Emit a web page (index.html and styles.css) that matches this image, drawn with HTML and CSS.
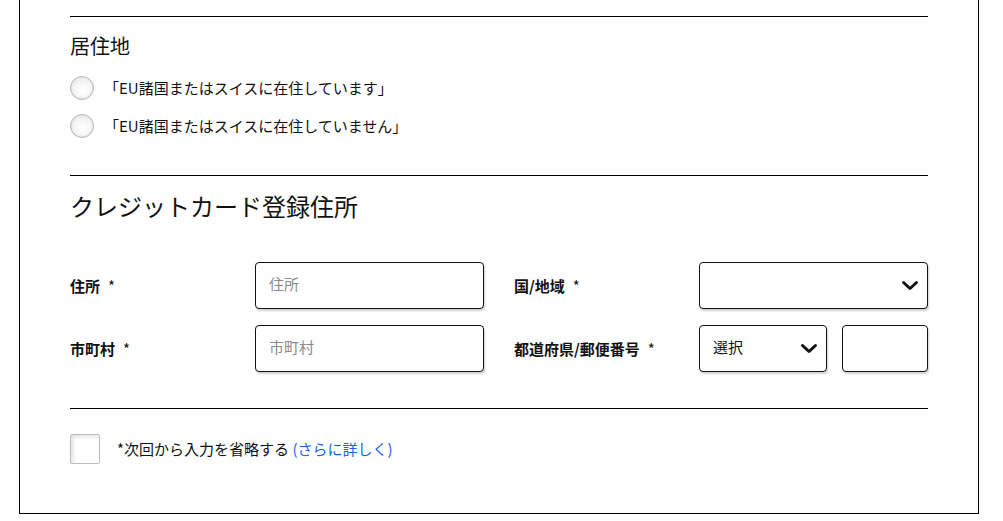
FILE: index.html
```html
<!DOCTYPE html>
<html lang="ja">
<head>
<meta charset="utf-8">
<link rel="stylesheet" href="styles.css">
</head>
<body>
<div class="panel">
  <hr class="rule rule-top">
  <section class="residence">
    <h2 class="h-small">居住地</h2>
    <label class="radio-row"><span class="radio"></span><span>「EU諸国またはスイスに在住しています」</span></label>
    <label class="radio-row"><span class="radio"></span><span>「EU諸国またはスイスに在住していません」</span></label>
  </section>
  <hr class="rule rule-mid">
  <section class="address">
    <h2 class="h-large">クレジットカード登録住所</h2>
    <div class="grid">
      <div class="lbl">住所<span class="req">*</span></div>
      <div class="field"><span class="ph">住所</span></div>
      <div class="sp"></div>
      <div class="lbl">国/地域<span class="req">*</span></div>
      <div class="field select">
        <span></span>
        <svg class="chev" width="18" height="11" viewBox="0 0 18 11"><path d="M2.5 2.5 L9 8.5 L15.5 2.5" fill="none" stroke="#111" stroke-width="3" stroke-linecap="round" stroke-linejoin="round"/></svg>
      </div>
      <div class="lbl">市町村<span class="req">*</span></div>
      <div class="field"><span class="ph">市町村</span></div>
      <div class="sp"></div>
      <div class="lbl">都道府県/郵便番号<span class="req">*</span></div>
      <div class="pair">
        <div class="field select">
          <span class="val">選択</span>
          <svg class="chev" width="18" height="11" viewBox="0 0 18 11"><path d="M2.5 2.5 L9 8.5 L15.5 2.5" fill="none" stroke="#111" stroke-width="3" stroke-linecap="round" stroke-linejoin="round"/></svg>
        </div>
        <div class="field"></div>
      </div>
    </div>
  </section>
  <hr class="rule rule-bot">
  <div class="remember">
    <span class="check"></span>
    <span class="remember-text">*次回から入力を省略する <a class="more" href="#">(さらに詳しく)</a></span>
  </div>
</div>
</body>
</html>
```

FILE: styles.css
```css
html, body {
  margin: 0;
  padding: 0;
  background: #fff;
}
body {
  font-family: "Noto Sans CJK JP", "Noto Sans", sans-serif;
  color: #111;
}
.panel {
  box-sizing: border-box;
  width: 960px;
  height: 514px;
  margin-left: 19px;
  border: 1px solid #000;
  border-top: 0;
  padding: 16px 50px 0 50px;
}
.rule {
  border: 0;
  height: 1px;
  background: #000;
  margin: 0;
}
.h-small {
  font-size: 20px;
  font-weight: 400;
  line-height: 30px;
  margin: 14px 0 0 0;
}
.residence {
  padding-bottom: 30px;
}
.radio-row {
  display: flex;
  align-items: center;
  gap: 10px;
  height: 38px;
  font-size: 15px;
  line-height: 20px;
}
.radio-row:first-of-type {
  margin-top: 8px;
}
.radio {
  box-sizing: border-box;
  width: 24px;
  height: 24px;
  border-radius: 50%;
  border: 1px solid #b5b5b5;
  background: radial-gradient(circle at 55% 60%, #ffffff 0%, #f6f6f6 45%, #dcdcdc 100%);
  box-shadow: inset 0 -1px 2px rgba(0,0,0,0.08);
  flex: none;
}
.h-large {
  font-size: 24px;
  font-weight: 400;
  line-height: 36px;
  margin: 12px 0 0 0;
}
.grid {
  display: grid;
  grid-template-columns: 185px 229px 30px 185px 229px;
  grid-auto-rows: 47px;
  row-gap: 16px;
  margin-top: 38px;
  margin-bottom: 36px;
}
.lbl {
  font-size: 15px;
  font-weight: 700;
  display: flex;
  align-items: center;
}
.req {
  margin-left: 8px;
  font-weight: 400;
}
.field {
  box-sizing: border-box;
  border: 1px solid #111;
  border-radius: 4px;
  box-shadow: 1px 2px 2px rgba(0,0,0,0.18);
  background: #fff;
  display: flex;
  align-items: center;
  padding: 0 0 4px 13px;
  font-size: 15px;
}
.ph {
  color: #8a8a8a;
}
.val {
  color: #111;
}
.select {
  justify-content: space-between;
  padding-right: 8px;
  padding-bottom: 0;
}
.select .val {
  padding-bottom: 4px;
}
.chev {
  display: block;
}
.pair {
  display: grid;
  grid-template-columns: 128px 86px;
  column-gap: 15px;
}
.remember {
  display: flex;
  align-items: center;
  gap: 17px;
  margin-top: 25px;
}
.check {
  box-sizing: border-box;
  width: 30px;
  height: 30px;
  border: 1px solid #bdbdbd;
  border-radius: 2px;
  background: #fff;
  box-shadow: inset 4px 4px 4px -2px rgba(0,0,0,0.12);
  flex: none;
}
.remember-text {
  font-size: 15px;
  line-height: 20px;
}
.more {
  color: #1a5fe8;
  text-decoration: none;
}
```
